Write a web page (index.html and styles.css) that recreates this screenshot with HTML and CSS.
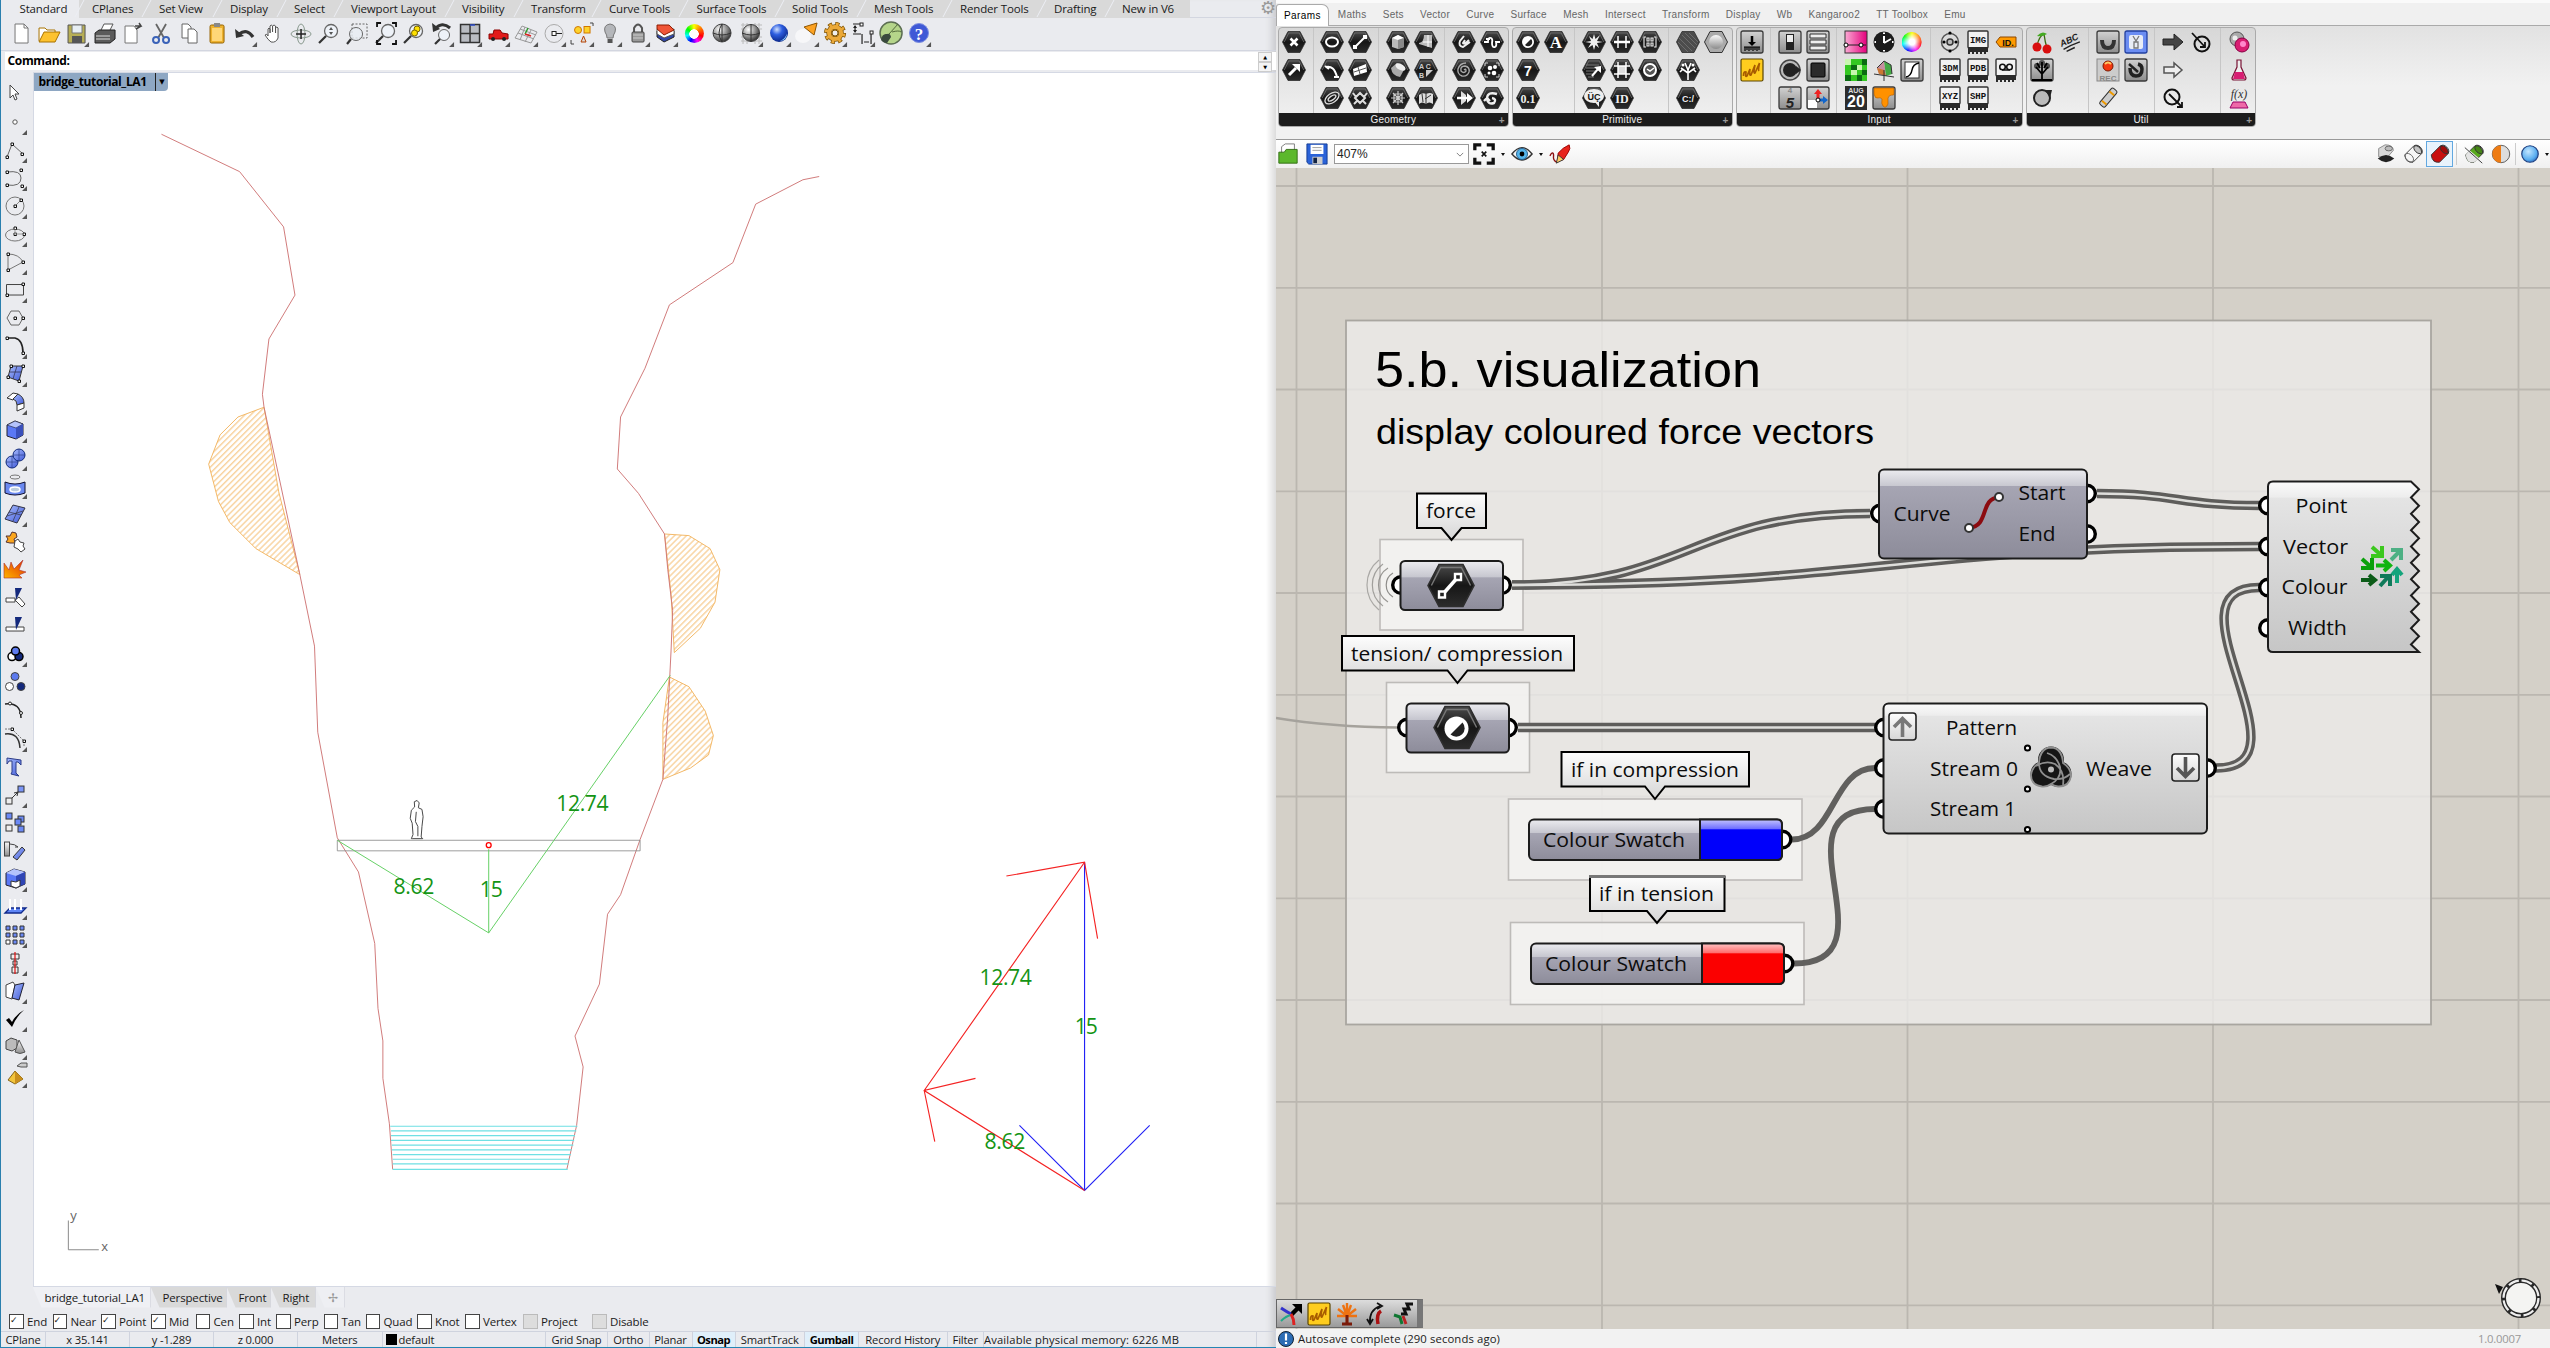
FILE: index.html
```html
<!DOCTYPE html>
<html lang="en">
<head>
<meta charset="utf-8">
<title>bridge_tutorial_LA1</title>
<link rel="stylesheet" href="styles.css">
</head>
<body>
<svg class="defs" aria-hidden="true">
  <defs>
    <linearGradient id="gHex" x1="0" y1="0" x2="0" y2="1"><stop offset="0" stop-color="#4a4a4a"/><stop offset=".5" stop-color="#161616"/><stop offset="1" stop-color="#2c2c2c"/></linearGradient>
    <linearGradient id="gBlue" x1="0" y1="0" x2="1" y2="1"><stop offset="0" stop-color="#a9bdfc"/><stop offset="1" stop-color="#4059d8"/></linearGradient>
    <linearGradient id="gGrey" x1="0" y1="0" x2="0" y2="1"><stop offset="0" stop-color="#fafafa"/><stop offset="1" stop-color="#8b8b8b"/></linearGradient>
    <linearGradient id="gFlat" x1="0" y1="0" x2="0" y2="1"><stop offset="0" stop-color="#d2d2d2"/><stop offset="1" stop-color="#8d8d8d"/></linearGradient>
    <linearGradient id="gParam" x1="0" y1="0" x2="0" y2="1"><stop offset="0" stop-color="#ececf0"/><stop offset=".33" stop-color="#c6c6cf"/><stop offset=".34" stop-color="#a6a5b3"/><stop offset="1" stop-color="#8d8c9a"/></linearGradient>
    <linearGradient id="gCurve" x1="0" y1="0" x2="0" y2="1"><stop offset="0" stop-color="#ececf0"/><stop offset=".18" stop-color="#c9c9d1"/><stop offset=".19" stop-color="#a6a5b3"/><stop offset="1" stop-color="#8d8c9a"/></linearGradient>
    <linearGradient id="gComp" x1="0" y1="0" x2="0" y2="1"><stop offset="0" stop-color="#fbfbfb"/><stop offset=".09" stop-color="#ededed"/><stop offset=".1" stop-color="#e4e4e4"/><stop offset="1" stop-color="#c6c6c6"/></linearGradient>
    <linearGradient id="gLabel" x1="0" y1="0" x2="0" y2="1"><stop offset="0" stop-color="#fdfdfd"/><stop offset="1" stop-color="#d6d6d6"/></linearGradient>
    <linearGradient id="gSwBlue" x1="0" y1="0" x2="0" y2="1"><stop offset="0" stop-color="#c4c4ff"/><stop offset=".24" stop-color="#6a6aff"/><stop offset=".25" stop-color="#0000fb"/></linearGradient>
    <linearGradient id="gSwRed" x1="0" y1="0" x2="0" y2="1"><stop offset="0" stop-color="#ffc4c4"/><stop offset=".24" stop-color="#ff6a6a"/><stop offset=".25" stop-color="#fb0000"/></linearGradient>
    <linearGradient id="gFire" x1="0" y1="1" x2="1" y2="0"><stop offset="0" stop-color="#ffb400"/><stop offset="1" stop-color="#e02c00"/></linearGradient>
    <linearGradient id="gPink" x1="0" y1="0" x2="1" y2="0"><stop offset="0" stop-color="#fbaad4"/><stop offset="1" stop-color="#e4007c"/></linearGradient>
    <radialGradient id="gBall" cx=".35" cy=".3" r=".75"><stop offset="0" stop-color="#fff"/><stop offset=".5" stop-color="#9a9a9a"/><stop offset="1" stop-color="#2c2c2c"/></radialGradient>
    <radialGradient id="gBlueBall" cx=".38" cy=".3" r=".75"><stop offset="0" stop-color="#cfe0ff"/><stop offset=".4" stop-color="#2e5ee0"/><stop offset="1" stop-color="#062080"/></radialGradient>
    <radialGradient id="gSky" cx=".4" cy=".35" r=".7"><stop offset="0" stop-color="#c3e6ff"/><stop offset=".7" stop-color="#5aaef0"/><stop offset="1" stop-color="#2c6cc0"/></radialGradient>
    <symbol id="hex" viewBox="-12 -12 24 24" overflow="visible"><path d="M-11.500 0L-6-10.500H6L11.500 0L6 10.500H-6Z" fill="url(#gHex)" stroke="#2e2e2e" stroke-width=".8"/><path d="M-9.800 0L-5.200-9H5.200L9.800 0" fill="none" stroke="#777" stroke-width=".7"/></symbol>
    <symbol id="btn" viewBox="-12 -12 24 24" overflow="visible"><rect x="-11" y="-11" width="22" height="22" rx="2" fill="url(#gFlat)" stroke="#3a3a3a" stroke-width="1.3"/></symbol>
    <symbol id="chip" viewBox="-12 -12 24 24" overflow="visible"><rect x="-10" y="-11" width="20" height="17" rx="1" fill="#f2f2f2" stroke="#333" stroke-width="1.4"/><path d="M-10 5H10V10H8V12H6V10H4V12H2V10H0V12H-2V10H-4V12H-6V10H-8V12H-10Z" fill="#2a2a2a"/></symbol>
    <symbol id="tri" viewBox="0 0 28 28"><path d="M26 22V27H21Z" fill="#555"/></symbol>
    <symbol id="lens" viewBox="0 0 28 28"><circle cx="16" cy="11" r="6.500" fill="#eef2f8" stroke="#666" stroke-width="1.300"/><path d="M11 16L4 23" stroke="#333" stroke-width="2.200"/></symbol>
    <symbol id="scrib" viewBox="-12 -12 24 24"><rect x="-11" y="-11" width="22" height="22" rx="1.500" fill="#ffcd1e" stroke="#5a4500" stroke-width="1.200"/><path d="M-8.500 6Q-8.500 1-6 2Q-7 8-5 6L-2-1Q-3 6-1 5L3-5Q1 4 3 3L7.500-7Q6 0 7 1" fill="none" stroke="#a85c00" stroke-width="1.700"/></symbol>
    <symbol id="tube" viewBox="-12 -12 24 24"><path d="M-9 1L1-9Q8-10 10-1L0 9Q-8 10-9 1Z" stroke="#333"/><ellipse cx="5.500" cy="-5" rx="3.500" ry="5.500" transform="rotate(-45 5.500 -5)" fill="#0003" stroke="#333"/></symbol>
    <pattern id="hatch" width="2.600" height="2.600" patternUnits="userSpaceOnUse" patternTransform="rotate(-45)"><path d="M0 1H2.600" stroke="#f3b765" stroke-width=".55"/></pattern>
  </defs>
</svg>

<main class="desktop">
<section class="rhino">
  <nav class="rtabs"><span class="on">Standard</span><span>CPlanes</span><span>Set View</span><span>Display</span><span>Select</span><span>Viewport Layout</span><span>Visibility</span><span>Transform</span><span>Curve Tools</span><span>Surface Tools</span><span>Solid Tools</span><span>Mesh Tools</span><span>Render Tools</span><span>Drafting</span><span>New in V6</span><b>⚙</b></nav>
  <div class="rtools">
    <svg viewBox="0 0 28 28"><path d="M8 4H17L21 8V23H8Z" fill="#fff" stroke="#777"/><path d="M17 4V8H21" fill="none" stroke="#777"/></svg>
    <svg viewBox="0 0 28 28"><path d="M4 21V8H10L12 10H20V13" fill="#fff" stroke="#a87300"/><path d="M4 22L9 12H25L20 22Z" fill="#fdc22e" stroke="#a87300"/></svg>
    <svg viewBox="0 0 28 28"><path d="M5 5H22V23H5Z" fill="#b7ae55" stroke="#555"/><path d="M9 5H19V13H9Z" fill="#e7eef3" stroke="#777"/><path d="M9 16H19V23H9Z" fill="#555"/><use href="#tri"/></svg>
    <svg viewBox="0 0 28 28"><path d="M9 12L13 4H22L18 12" fill="#fff" stroke="#555"/><path d="M4 13L8 10H24V19L19 23H4Z" fill="#5b5b5b" stroke="#222"/><path d="M5 16H19M5 19H19" stroke="#ddd"/></svg>
    <svg viewBox="0 0 28 28"><path d="M6 6H15L18 10V23H6Z" fill="#fff" stroke="#777"/><path d="M16 6H22L20 3M17 9L22 6" stroke="#444" fill="none" stroke-width="1.500"/></svg>
    <svg viewBox="0 0 28 28"><path d="M9 4L17 18M19 4L11 18" stroke="#666" stroke-width="1.800"/><g fill="none" stroke="#3a62b8" stroke-width="2"><circle cx="9" cy="20" r="3"/><circle cx="19" cy="20" r="3"/></g></svg>
    <svg viewBox="0 0 28 28"><path d="M7 4H13L16 7V18H7Z" fill="#fff" stroke="#666"/><path d="M13 9H19L22 12V23H13Z" fill="#fff" stroke="#666"/></svg>
    <svg viewBox="0 0 28 28"><rect x="7" y="5" width="14" height="18" rx="1.500" fill="#eeb22e" stroke="#946200"/><path d="M9 8H19V21H9Z" fill="#ffd778"/><rect x="11" y="3" width="6" height="4" fill="#888"/></svg>
    <svg viewBox="0 0 28 28"><path d="M8 14Q16 8 22 17" fill="none" stroke="#333" stroke-width="3.200"/><path d="M4 9L5 18L13 16Z" fill="#333"/><use href="#tri"/></svg>
    <svg viewBox="0 0 28 28"><path d="M9 16V9Q10 7 11 9V13V6Q12 4 13.500 6V12V6Q15 4 16.500 6V13V8Q18 6 19 8V18Q17 23 12 22Q9 20 6 15Q8 13 9 16Z" fill="#fff" stroke="#555"/></svg>
    <svg viewBox="0 0 28 28"><g fill="none" stroke="#8a9a8f"><ellipse cx="14" cy="14" rx="10" ry="4"/><ellipse cx="14" cy="14" rx="4" ry="10"/></g><path d="M14 9V19M9 14H19" stroke="#222" stroke-width="1.500"/></svg>
    <svg viewBox="0 0 28 28"><use href="#lens"/><path d="M16 7L14 10H18ZM16 15L14 12H18Z" fill="#555"/></svg>
    <svg viewBox="0 0 28 28"><path d="M9 4H24V18H9Z" fill="none" stroke="#666" stroke-dasharray="2 1.500"/><circle cx="13" cy="14" r="6.500" fill="#e9eef4cc" stroke="#666"/><path d="M8 19L4 24" stroke="#333" stroke-width="2.200"/></svg>
    <svg viewBox="0 0 28 28"><use href="#lens"/><path d="M5 7V3H9M20 3H24V7M5 20V24H9M20 24H24V20" stroke="#111" stroke-width="1.800" fill="none"/></svg>
    <svg viewBox="0 0 28 28"><use href="#lens"/><circle cx="17" cy="9" r="3" fill="#ffe100" stroke="#776200"/><circle cx="14.500" cy="13" r="3" fill="#ffe100" stroke="#776200"/></svg>
    <svg viewBox="0 0 28 28"><circle cx="16" cy="15" r="5.500" fill="#eef2f8" stroke="#666"/><path d="M12 19L7 24" stroke="#333" stroke-width="2.200"/><path d="M7 9Q14 1 22 8" fill="none" stroke="#333" stroke-width="3"/><path d="M4 3L5 12L12 9Z" fill="#333"/><use href="#tri"/></svg>
    <svg viewBox="0 0 28 28"><rect x="4.500" y="4.500" width="19" height="18" fill="#b9bcc2" stroke="#333" stroke-width="1.500"/><path d="M14 4V23M4 13.500H24" stroke="#333" stroke-width="1.500"/><path d="M14 5H19" stroke="#2c4ccc" stroke-width="1.500"/><use href="#tri"/></svg>
    <svg viewBox="0 0 28 28"><path d="M5 14H9L10 10H16L18 13L24 14V19H5Z" fill="#e21a1a" stroke="#8c0000"/><circle cx="9" cy="19" r="2" fill="#222"/><circle cx="20" cy="19" r="2" fill="#222"/><use href="#tri"/></svg>
    <svg viewBox="0 0 28 28"><path d="M3 18L10 6L25 12L19 23ZM6 13L22 19M13 7L8 20M19 10L13 22M8 9L24 15" fill="none" stroke="#999"/><path d="M13 14L16 8" stroke="#2a9a2a" stroke-width="1.500"/><path d="M13 14L19 16" stroke="#d22" stroke-width="1.500"/><use href="#tri"/></svg>
    <svg viewBox="0 0 28 28"><circle cx="14" cy="13.500" r="9" fill="none" stroke="#aaa"/><path d="M14 13.500H22" stroke="#222"/><rect x="12" y="11.500" width="4" height="4" fill="#fff" stroke="#222"/><use href="#tri"/></svg>
    <svg viewBox="0 0 28 28"><circle cx="10" cy="10" r="3.500" fill="#fdd32c" stroke="#d17800"/><rect x="16" y="6.500" width="6" height="6.500" fill="#fdd32c" stroke="#d17800"/><path d="M13 22L15.500 16L18 22Z" fill="#ddd" stroke="#b54100"/><path d="M22 3H25V6M3 20V24H6" fill="none" stroke="#444"/><use href="#tri"/></svg>
    <svg viewBox="0 0 28 28"><path d="M11 18Q11 15 9 12Q7 5 14 4Q21 5 19 12Q17 15 17 18Z" fill="#b4b6ba" stroke="#777"/><path d="M11.500 19H16.500V23H11.500Z" fill="#555"/><use href="#tri"/></svg>
    <svg viewBox="0 0 28 28"><path d="M10 13V8Q14 1 18 8V13" fill="none" stroke="#555" stroke-width="2"/><rect x="8" y="12" width="12" height="10" rx="1" fill="#999" stroke="#444"/><path d="M9 15H19M9 18H19" stroke="#ccc"/><use href="#tri"/></svg>
    <svg viewBox="0 0 28 28"><path d="M5 11L12 14L22 11V17L12 22L5 17Z" fill="#3146a8" stroke="#222"/><path d="M5 9L12 12L22 9V14L12 18L5 14Z" fill="#fff" stroke="#555"/><path d="M5 5L17 5L22 10L12 15L5 9Z" fill="#f05537" stroke="#8c1b00"/><use href="#tri"/></svg>
    <span class="wheel"></span>
    <svg viewBox="0 0 28 28"><circle cx="14" cy="13" r="9" fill="url(#gBall)" stroke="#444"/><path d="M14 4Q8 13 14 22M14 4V22M5 13Q14 17 23 13" fill="none" stroke="#333"/></svg>
    <svg viewBox="0 0 28 28"><path d="M4 5H25M4 9H25M4 17H25M4 21H25M6 3V24M10 3V24M18 3V24M22 3V24" stroke="#bbb"/><circle cx="14" cy="13" r="8.500" fill="url(#gBall)" stroke="#444"/><path d="M14 4V22M5 13Q14 17 23 13" fill="none" stroke="#333"/><use href="#tri"/></svg>
    <svg viewBox="0 0 28 28"><circle cx="14" cy="13" r="9" fill="url(#gBlueBall)"/><path d="M15 21Q22 20 22 13Q21 18 15 21Z" fill="#8cf"/><use href="#tri"/></svg>
    <svg viewBox="0 0 28 28"><ellipse cx="10" cy="16" rx="8" ry="7" fill="#fff9"/><path d="M11 7L24 3L21 15Z" fill="#fca222" stroke="#8e5400"/><use href="#tri"/></svg>
    <svg viewBox="0 0 28 28"><circle cx="14" cy="13" r="8.800" fill="none" stroke="#805300" stroke-width="4.500" stroke-dasharray="3.900 3.010"/><circle cx="14" cy="13" r="6" fill="none" stroke="#805300" stroke-width="5.500"/><circle cx="14" cy="13" r="6" fill="none" stroke="#eba939" stroke-width="4"/><circle cx="14" cy="13" r="8.600" fill="none" stroke="#eba939" stroke-width="3.400" stroke-dasharray="2.600 4.154" stroke-dashoffset="-.65"/><circle cx="14" cy="13" r="3" fill="#eee" stroke="#805300"/><use href="#tri"/></svg>
    <svg viewBox="0 0 28 28"><path d="M4 4H12M4 14H12M6 6V12M13 14V24M22 14V24M15 22H20" fill="none" stroke="#222" stroke-width="1.200"/><path d="M6 5L4 8H8ZM6 13L4 10H8Z" fill="#222"/><rect x="11" y="3" width="3" height="3" fill="#fff" stroke="#222"/><rect x="21" y="11" width="3" height="3" fill="#fff" stroke="#222"/><use href="#tri"/></svg>
    <svg viewBox="0 0 28 28"><circle cx="14" cy="13" r="11" fill="#b5d58a" stroke="#5c6e52" stroke-width="1.500"/><path d="M4 20Q5 13 10 14Q13 13 14 17L10 23Q6 23 4 20Z" fill="#3a4a3e"/><path d="M12 14L21 4M15 12Q22 10 24 12" stroke="#536a3c" fill="none"/></svg>
    <svg viewBox="0 0 28 28"><circle cx="14" cy="13" r="9.500" fill="#3f59d6" stroke="#7e8fe0"/><text x="14" y="19.500" text-anchor="middle" class="q">?</text><use href="#tri"/></svg>
  </div>
  <div class="cmd"><span>Command:</span><i><b>▲</b><b>▼</b></i></div>
  <div class="work">
    <div class="side">
      <svg viewBox="0 0 28 28"><path d="M9 5V18L12 15L14 20L16 19L14 14H18Z" fill="#fff" stroke="#444"/></svg>
      <svg viewBox="0 0 28 28"><circle cx="14" cy="14" r="2.200" fill="#fff" stroke="#555"/><use href="#tri"/></svg>
      <svg viewBox="0 0 28 28"><path d="M6 21L11 8L22 18" fill="none" stroke="#666"/><path d="M5 20h2.500v2.500h-2.500zM10 7h2.500v2.500h-2.500zM20 17h2.500v2.500h-2.500z" fill="#fff" stroke="#111"/><use href="#tri"/></svg>
      <svg viewBox="0 0 28 28"><path d="M6 8Q20 6 20 14Q20 23 6 21" fill="none" stroke="#666"/><path d="M5 7h2.500v2.500h-2.500zM19 5h2.500v2.500h-2.500zM5 20h2.500v2.500h-2.500zM20 21h2.500v2.500h-2.500z" fill="#fff" stroke="#111"/><use href="#tri"/></svg>
      <svg viewBox="0 0 28 28"><circle cx="14" cy="14" r="9" fill="none" stroke="#777"/><path d="M14 14L20 8" stroke="#888"/><path d="M13 13h2.500v2.500h-2.500zM19 7h2.500v2.500h-2.500z" fill="#fff" stroke="#111"/><use href="#tri"/></svg>
      <svg viewBox="0 0 28 28"><ellipse cx="14" cy="15" rx="9.500" ry="6" fill="none" stroke="#777"/><path d="M13 7h2.500v2.500h-2.500zM13 13h2.500v2.500h-2.500zM22 13h2.500v2.500h-2.500z" fill="#fff" stroke="#111"/><path d="M14 9V14H22" stroke="#999" fill="none"/><use href="#tri"/></svg>
      <svg viewBox="0 0 28 28"><path d="M7 6Q18 6 22 14L7 22Z" fill="none" stroke="#777"/><path d="M6 5h2.500v2.500h-2.500zM21 13h2.500v2.500h-2.500zM6 21h2.500v2.500h-2.500z" fill="#fff" stroke="#111"/><use href="#tri"/></svg>
      <svg viewBox="0 0 28 28"><path d="M5.500 8.500H22.500V19H5.500Z" fill="none" stroke="#444"/><path d="M21 7h2.500v2.500h-2.500zM5 18h2.500v2.500h-2.500z" fill="#fff" stroke="#111"/><use href="#tri"/></svg>
      <svg viewBox="0 0 28 28"><path d="M6 14L10 7H18L22 14L18 21H10Z" fill="none" stroke="#666"/><path d="M13 13h2.500v2.500h-2.500zM21 13h2.500v2.500h-2.500z" fill="#fff" stroke="#111"/><use href="#tri"/></svg>
      <svg viewBox="0 0 28 28"><path d="M6 6H14Q22 8 22 21" fill="none" stroke="#222" stroke-width="1.600"/><path d="M5 5h2.500v2.500h-2.500zM21 20h2.500v2.500h-2.500z" fill="#fff" stroke="#111"/><use href="#tri"/></svg>
      <svg viewBox="0 0 28 28"><path d="M10 6H22L18 21L7 17Z" fill="url(#gBlue)" stroke="#333"/><path d="M16 6L12 19M9 12H20" stroke="#335" stroke-width=".8"/><path d="M9 5h2.500v2.500h-2.500zM21 5h2.500v2.500h-2.500zM17 20h2.500v2.500h-2.500zM6 16h2.500v2.500h-2.500z" fill="#fff" stroke="#111"/><use href="#tri"/></svg>
      <svg viewBox="0 0 28 28"><path d="M6 10L12 5L17 6L12 12Z" fill="#fff" stroke="#333"/><path d="M17 6Q23 9 23 15L16 17Q16 12 12 11Z" fill="url(#gBlue)" stroke="#333"/><path d="M16 17L23 15V20L16 23Z" fill="#fff" stroke="#333"/><use href="#tri"/></svg>
      <svg viewBox="0 0 28 28"><path d="M6 9L14 5L22 8V19L15 23L6 20Z" fill="#5a78f5" stroke="#223"/><path d="M6 9L14 5L22 8L15 12Z" fill="#b4c3fc" stroke="#223" stroke-width=".6"/><path d="M15 12V23L22 19V8Z" fill="#3a50bc"/><use href="#tri"/></svg>
      <svg viewBox="0 0 28 28"><circle cx="11" cy="18" r="6" fill="url(#gBlue)" stroke="#112a7a"/><circle cx="18" cy="11" r="6" fill="url(#gBlue)" stroke="#112a7a"/><path d="M18 5V17M12 11H24M5 18H17M11 12V24" stroke="#23357c" stroke-width=".6"/><use href="#tri"/></svg>
      <svg viewBox="0 0 28 28"><ellipse cx="14" cy="5" rx="5" ry="2" fill="none" stroke="#777"/><path d="M4 10Q14 14 24 10V21Q14 25 4 21Z" fill="#6b89f0" stroke="#113"/><ellipse cx="14" cy="17.500" rx="5" ry="2.500" fill="#bcd" stroke="#fff" stroke-width="1.500"/><use href="#tri"/></svg>
      <svg viewBox="0 0 28 28"><path d="M4 19L12 5L24 8L16 23Z" fill="url(#gBlue)" stroke="#334"/><path d="M8 12L20 15M12 21L18 7M6 16L22 11" stroke="#334" stroke-width=".7"/><use href="#tri"/></svg>
      <svg viewBox="0 0 28 28"><path d="M5 8L9 8L11 4L15 5L16 9L13 11L14 15L9 15L5 14L7 11Z" fill="#fba61e" stroke="#533"/><path d="M14 13L17 11L19 14L23 15L22 18L24 21L20 24L17 21L13 19Z" fill="#fff" stroke="#444"/></svg>
      <svg viewBox="0 0 28 28"><path d="M3 22V7L8 14L10 6L13 13L22 4L18 14L25 16L18 19L21 22Z" fill="url(#gFire)" stroke="#a33" stroke-width=".6"/></svg>
      <svg viewBox="0 0 28 28"><path d="M5 14H14V18H5ZM14 16L18 13L24 20L21 23Z" fill="#fff" stroke="#444"/><path d="M14 4H21L15 16Z" fill="#14297c"/></svg>
      <svg viewBox="0 0 28 28"><path d="M5 15H23V19H5Z" fill="#fff" stroke="#444"/><path d="M14 5H21L15 18Z" fill="#14297c"/></svg>
      <svg viewBox="0 0 28 28"><circle cx="11" cy="16.500" r="4" fill="#fff" stroke="#000" stroke-width="1.500"/><circle cx="18" cy="16.500" r="4" fill="#14297c" stroke="#000" stroke-width="1.500"/><circle cx="14.500" cy="11" r="4" fill="#5d7bef" stroke="#000" stroke-width="1.500"/><use href="#tri"/></svg>
      <svg viewBox="0 0 28 28"><circle cx="8.500" cy="18.500" r="4" fill="#fff" stroke="#444"/><circle cx="20" cy="18.500" r="4" fill="#14297c" stroke="#444"/><circle cx="14" cy="8.500" r="4" fill="#5d7bef" stroke="#444"/></svg>
      <svg viewBox="0 0 28 28"><path d="M4 7Q20 5 20 21" fill="none" stroke="#222" stroke-width="1.500"/><circle cx="9" cy="6.500" r="1.500" fill="#fff" stroke="#222"/><circle cx="20" cy="16" r="1.500" fill="#fff" stroke="#222"/></svg>
      <svg viewBox="0 0 28 28"><path d="M4 9Q18 7 19 23" fill="none" stroke="#333" stroke-width="1.500"/><path d="M4 4H11L23 16V22" fill="none" stroke="#777" stroke-dasharray="2 1"/><path d="M10 3h2.500v2.500h-2.500zM22 15h2.500v2.500h-2.500z" fill="#fff" stroke="#111"/><use href="#tri"/></svg>
      <svg viewBox="0 0 28 28"><path d="M6 5L20 7V12L17 9L15 9V20L18 23L10 21L11 19V8L8 8L6 11Z" fill="url(#gBlue)" stroke="#2c3c88"/></svg>
      <svg viewBox="0 0 28 28"><rect x="5" y="17" width="6" height="6" fill="#eee" stroke="#333"/><rect x="17" y="5" width="6" height="6" fill="#7b95f7" stroke="#333"/><path d="M11 17L17 11M17 11L13 12M17 11L16 15" stroke="#333"/><use href="#tri"/></svg>
      <svg viewBox="0 0 28 28"><g fill="#6b89f5" stroke="#333"><rect x="5" y="4" width="6" height="6"/><rect x="17" y="7" width="6" height="6"/><rect x="14" y="10" width="6" height="6"/><rect x="17" y="17" width="6" height="6"/><rect x="5" y="16" width="6" height="6" fill="#eee"/></g></svg>
      <svg viewBox="0 0 28 28"><rect x="3.500" y="5" width="5" height="14" fill="url(#gGrey)" stroke="#444"/><path d="M9 7Q14 7 17 10M17 10L14 10" stroke="#444" fill="none"/><path d="M12 20L21 10L24 13L16 23Z" fill="url(#gBlue)" stroke="#333"/></svg>
      <svg viewBox="0 0 28 28"><path d="M5 8L13 4L24 7V19L15 23L5 20Z" fill="#5a78f5" stroke="#223"/><path d="M5 8L13 4L24 7L15 11Z" fill="#b4c3fc"/><path d="M15 11V23L24 19V7Z" fill="#3046b5"/><path d="M10 16L15 17L19 15V21L15 23L10 21Z" fill="#fff" stroke="#333"/><use href="#tri"/></svg>
      <svg viewBox="0 0 28 28"><path d="M4 20L9 15H25L20 20Z" fill="#5f86f6" stroke="#102a8c" stroke-width="1.300"/><path d="M9 17V6M14 17V6M20 17V6" stroke="#fff" stroke-width="2"/><use href="#tri"/></svg>
      <svg viewBox="0 0 28 28"><g fill="#6b89f5" stroke="#333"><path d="M5 5h4v4h-4zM12 5h4v4h-4zM19 5h4v4h-4zM5 12h4v4h-4zM12 12h4v4h-4zM19 12h4v4h-4zM12 19h4v4h-4zM19 19h4v4h-4z"/><path d="M5 19h4v4h-4z" fill="#fff"/></g><use href="#tri"/></svg>
      <svg viewBox="0 0 28 28"><path d="M10 5h8v5h-8zM12 12h4v4h-4zM11 18h6v6h-6z" fill="#eee" stroke="#333"/><path d="M14 3V25" stroke="#e01010" stroke-width="1.200"/><use href="#tri"/></svg>
      <svg viewBox="0 0 28 28"><path d="M5 8L12 5L14 8L11 22L5 20Z" fill="#fff" stroke="#444"/><path d="M14 8L23 6L18 23L11 21Z" fill="url(#gBlue)" stroke="#223"/><use href="#tri"/></svg>
      <svg viewBox="0 0 28 28"><path d="M5 15L8 13L11 17Q15 9 23 5Q15 12 11 22Z" fill="#000"/><use href="#tri"/></svg>
      <svg viewBox="0 0 28 28"><path d="M5 8L10 5L16 7V15L11 18L5 16Z" fill="#bbb" stroke="#444"/><path d="M18 7L24 19Q19 22 14 19Z" fill="url(#gGrey)" stroke="#555"/><use href="#tri"/></svg>
      <svg viewBox="0 0 28 28"><path d="M7 19L14 10L22 18L14 23Z" fill="#f2c43c" stroke="#84651a"/><path d="M14 10L14 23L22 18Z" fill="#c98f1d"/><path d="M16 5L20 2H26V6H20Z" fill="#ccc" stroke="#555"/><use href="#tri"/></svg>
    </div>
    <div class="view">
      <div class="vtitle"><span>bridge_tutorial_LA1</span><b>▼</b></div>
      <svg class="drawing" viewBox="21.700 44.300 763.200 746.200" preserveAspectRatio="none">
        <g fill="url(#hatch)" stroke="#f3b765" stroke-width=".6"><path d="M163 250L147 256L136 267L129 285L135 308L142 321L158 337L185 353L172 302Z"/><path d="M409 328L424 329L437 337L443 350L440 370L431 386L415 401L413 365Z"/><path d="M412 416L424 422L434 437L439 452L436 464L425 472L408 479V444Z"/></g>
        <g fill="none" stroke="#d07878" stroke-width=".6"><path d="M100 82L148 105L175 139L182 181L166 208L162 242L163 250L185 353L194 397L196 450L208 515L221 536L231 580L233 620L236 640V663L240 691L242 719"/><path d="M504 108L494 110L465 125L451 161L412 187L397 226L382 256L380 288L393 303L409 328L411 350L414 375L413 400L411 440L408 479L394 516L382 550L374 562L369 605L354 637L359 656L355 692L349 719"/></g>
        <path d="M240.500 692.500H355.500M241 695.400H354.800M241 698.300H354M241 701.200H353.500M241.500 704.100H353M241.500 707H352M242 709.900H351.500M242 712.800H350.500M242 715.700H350M242 719H349.500" stroke="#6fe0e4" stroke-width=".75"/>
        <path d="M208 516.500H394V523H208Z" fill="none" stroke="#888" stroke-width=".5"/>
        <path d="M254 515.500H260.500L259.500 514.500L260 508L260.700 502L260 497.500L257.800 496.500L258.300 493.500L257 492L255.300 492.800L255.500 496L253.500 498L252.800 503L254 506L254.500 513L253.500 515.500ZM256.500 499L256 505L257.500 508V514" fill="none" stroke="#444" stroke-width=".6"/>
        <path d="M208 516.500L301 573.500L412.500 415M301 573.500V522" fill="none" stroke="#62cf62" stroke-width=".6"/>
        <circle cx="301" cy="519.500" r="1.500" fill="#fff" stroke="#f00" stroke-width=".8"/>
        <path d="M667 530V732M627 692L667 732L707 692" fill="none" stroke="#2222f5" stroke-width=".7"/>
        <path d="M667 732L568.500 670.500L667 530M619 538.500L667 530L675 577M600 663L568.500 670.500L575 702" fill="none" stroke="#f42323" stroke-width=".7"/>
        <g class="dim"><text x="342.500" y="498.500" textLength="32">12.74</text><text x="242.500" y="549.500" textLength="25">8.62</text><text x="295.500" y="551.500" textLength="14">15</text><text x="602.500" y="605.500" textLength="32">12.74</text><text x="605.500" y="706.500" textLength="25">8.62</text><text x="661" y="636" textLength="14">15</text></g>
        <path d="M42.800 750.500V768.500H61.500" fill="none" stroke="#888" stroke-width=".6"/>
        <g class="axis"><text x="44" y="750">y</text><text x="63" y="769.500">x</text></g>
      </svg>
    </div>
  </div>
  <nav class="vtabs"><span class="on">bridge_tutorial_LA1</span><span>Perspective</span><span>Front</span><span>Right</span><span class="add">✢</span></nav>
  <div class="osnap"><label class="c">End</label><label class="c">Near</label><label class="c">Point</label><label class="c">Mid</label><label>Cen</label><label>Int</label><label>Perp</label><label>Tan</label><label>Quad</label><label>Knot</label><label>Vertex</label><label class="d">Project</label><label class="d">Disable</label></div>
  <footer class="rstat"><span>CPlane</span><span>x 35.141</span><span>y -1.289</span><span>z 0.000</span><span>Meters</span><span class="lay"><i></i>default</span><span>Grid Snap</span><span>Ortho</span><span>Planar</span><span class="hot">Osnap</span><span>SmartTrack</span><span class="hot">Gumball</span><span>Record History</span><span>Filter</span><span class="mem">Available physical memory: 6226 MB</span><span></span></footer>
</section>

<section class="gh">
  <nav class="gtabs"><span class="on">Params</span><span>Maths</span><span>Sets</span><span>Vector</span><span>Curve</span><span>Surface</span><span>Mesh</span><span>Intersect</span><span>Transform</span><span>Display</span><span>Wb</span><span>Kangaroo2</span><span>TT Toolbox</span><span>Emu</span></nav>
  <div class="ribbon">
    <article class="panel"><div class="groups">
      <div class="grp">
        <svg viewBox="-12 -12 24 24"><use href="#hex" x="-12" y="-12" width="24" height="24"/><path d="M-3.500-3.500L3.500 3.500M3.500-3.500L-3.500 3.500" stroke="#fff" stroke-width="2.600"/></svg>
        <svg viewBox="-12 -12 24 24"><use href="#hex" x="-12" y="-12" width="24" height="24"/><path d="M-5 5L2-2" stroke="#fff" stroke-width="3"/><path d="M6-6V2L-2-6Z" fill="#fff"/></svg><i></i>
      </div>
      <div class="grp">
        <svg viewBox="-12 -12 24 24"><use href="#hex" x="-12" y="-12" width="24" height="24"/><ellipse rx="6" ry="4.500" fill="none" stroke="#fff" stroke-width="2"/></svg>
        <svg viewBox="-12 -12 24 24"><use href="#hex" x="-12" y="-12" width="24" height="24"/><path d="M-6-3Q2-5 5 7M-7-4L-3-1M2 7H7" fill="none" stroke="#fff" stroke-width="2"/></svg>
        <svg viewBox="-12 -12 24 24"><use href="#hex" x="-12" y="-12" width="24" height="24"/><g fill="none" stroke="#ddd" stroke-width="1.300" transform="rotate(-35)"><ellipse rx="8" ry="4.500"/><ellipse rx="4.500" ry="2"/></g></svg>
        <svg viewBox="-12 -12 24 24"><use href="#hex" x="-12" y="-12" width="24" height="24"/><path d="M-5 5L5-5" stroke="#fff" stroke-width="2"/><rect x="-7" y="3" width="4" height="4" fill="#fff"/><rect x="3" y="-7" width="4" height="4" fill="#fff"/></svg>
        <svg viewBox="-12 -12 24 24"><use href="#hex" x="-12" y="-12" width="24" height="24"/><path d="M-7-1L6-6L7 2L-6 6Z" fill="#fff"/><path d="M-6 2L6-2M-2-3L0 4" stroke="#555"/></svg>
        <svg viewBox="-12 -12 24 24"><use href="#hex" x="-12" y="-12" width="24" height="24"/><path d="M-5 0L0-5L5 0L0 5ZM-4-1L-7-5M4-1L7-5M-6 6L-2 2M6 6L2 2" fill="none" stroke="#ddd" stroke-width="2"/></svg>
      </div>
      <div class="grp">
        <svg viewBox="-12 -12 24 24"><use href="#hex" x="-12" y="-12" width="24" height="24"/><path d="M-6-4L0-7L6-4V5L0 7L-6 5Z" fill="#bbb"/><path d="M-6-4L0-2L6-4L0-7Z" fill="#fff"/><path d="M0-2V7L6 5V-4Z" fill="#888"/></svg>
        <svg viewBox="-12 -12 24 24"><use href="#hex" x="-12" y="-12" width="24" height="24"/><path d="M-7-2L-1-7L7-2L2 7Q-6 6-7-2Z" fill="#aaa"/><ellipse cx="2.500" cy="-3" rx="5.500" ry="3" transform="rotate(30 2.500 -3)" fill="#eee"/></svg>
        <svg viewBox="-12 -12 24 24"><use href="#hex" x="-12" y="-12" width="24" height="24"/><path d="M0-7V7M-7 0H7M-5-5L5 5M5-5L-5 5M-4-4H4V4H-4Z" fill="none" stroke="#ccc" stroke-width="1.200"/></svg>
        <svg viewBox="-12 -12 24 24"><use href="#hex" x="-12" y="-12" width="24" height="24"/><path d="M-2-7H6V6L-7 2V1Q-2 0-2-7Z" fill="#bbb"/><path d="M2-7V5M-3 0H6" stroke="#fff"/></svg>
        <svg viewBox="-12 -12 24 24"><use href="#hex" x="-12" y="-12" width="24" height="24"/><text x="-7" y="-1" class="t7">A C</text><text x="-7" y="8" class="t7">B</text><path d="M0 0H7L0 7Z" fill="#ccc"/></svg>
        <svg viewBox="-12 -12 24 24"><use href="#hex" x="-12" y="-12" width="24" height="24"/><path d="M-7-3Q-3-6 0-4Q4-6 7-4V6Q3 3 0 6Q-4 3-7 6Z" fill="#ddd"/><path d="M0-4V6M-4-4L-3 4M-1 1L5-3" stroke="#333"/></svg>
      </div>
      <div class="grp">
        <svg viewBox="-12 -12 24 24"><use href="#hex" x="-12" y="-12" width="24" height="24"/><path d="M0-6L-4-1Q-6 4-1 5L6 0M1-2L-1 1Q0 3 5-2" fill="none" stroke="#eee" stroke-width="2"/></svg>
        <svg viewBox="-12 -12 24 24"><use href="#hex" x="-12" y="-12" width="24" height="24"/><path d="M0 0Q2-2 2 1Q0 4-3 1Q-4-4 1-4Q6-3 5 2Q3 7-2 6Q-7 4-6-1Q-4-7 2-7" fill="none" stroke="#aaa" stroke-width="1.400"/></svg>
        <svg viewBox="-12 -12 24 24"><use href="#hex" x="-12" y="-12" width="24" height="24"/><path d="M-3-7L2-3V3L-3 7Z" fill="#ddd"/><path d="M-7 0H5" stroke="#fff" stroke-width="2.500"/><path d="M3-5L9 0L3 5Z" fill="#fff"/></svg>
        <svg viewBox="-12 -12 24 24"><use href="#hex" x="-12" y="-12" width="24" height="24"/><path d="M-8 0H-4Q-4-5-1-4Q1-3 0 1Q0 6 3 5Q5 4 4 0H8M-6-3H-2" fill="none" stroke="#fff" stroke-width="1.800"/></svg>
        <svg viewBox="-12 -12 24 24"><use href="#hex" x="-12" y="-12" width="24" height="24"/><g fill="#fff"><circle cx="-2" cy="-2" r="2.300"/><circle cx="3" cy="-3" r="2"/><circle cx="2" cy="3" r="2.300"/><circle cx="-3" cy="3" r="1.500"/></g><path d="M-7-4V-7H-4M4-7H7V-4M-7 4V7H-4M4 7H7V4" fill="none" stroke="#ccc"/></svg>
        <svg viewBox="-12 -12 24 24"><use href="#hex" x="-12" y="-12" width="24" height="24"/><path d="M5-4Q-5-7-5 1Q-4 7 2 5Q5 1 0 0M-8 3L-5 0L-2 3" fill="none" stroke="#eee" stroke-width="2.400"/></svg>
      </div>
    </div><h6>Geometry<b>+</b></h6></article>
    <article class="panel"><div class="groups">
      <div class="grp">
        <svg viewBox="-12 -12 24 24"><use href="#hex" x="-12" y="-12" width="24" height="24"/><circle r="6" fill="#fff"/><path d="M3-3A4.200 4.200 0 0 1-3 3Z" fill="#222"/></svg>
        <svg viewBox="-12 -12 24 24"><use href="#hex" x="-12" y="-12" width="24" height="24"/><text x="0" y="5.500" class="t14">7</text></svg>
        <svg viewBox="-12 -12 24 24"><use href="#hex" x="-12" y="-12" width="24" height="24"/><text x="0" y="5" class="t12s">0.1</text></svg>
        <svg viewBox="-12 -12 24 24"><use href="#hex" x="-12" y="-12" width="24" height="24"/><text x="0" y="6" class="t16s">A</text></svg><i></i><i></i>
      </div>
      <div class="grp">
        <svg viewBox="-12 -12 24 24"><use href="#hex" x="-12" y="-12" width="24" height="24"/><path d="M0-8L1.500-3L6-7L3-1L9 0L3 1L5 6L1.500 3L0 8L-1.500 3L-6 6L-3 1L-9 0L-3-1L-5-6L-1.500-3Z" fill="#eee"/></svg>
        <svg viewBox="-12 -12 24 24"><use href="#hex" x="-12" y="-12" width="24" height="24"/><path d="M-8-5H5M-8-2H5M-8 1H3M-8 4H0M-6 7H0" stroke="#777"/><path d="M-2 6L4-1" stroke="#fff" stroke-width="2"/><path d="M7-4V3L0-3Z" fill="#fff"/></svg>
        <svg viewBox="-12 -12 24 24"><use href="#hex" x="-12" y="-12" width="24" height="24"/><ellipse cx="0" cy="-2" rx="10" ry="7" fill="#eee"/><path d="M0 3L5 9L5 3Z" fill="#eee"/><text x="0" y="1.500" class="t9k">ÜÇ</text></svg>
        <svg viewBox="-12 -12 24 24"><use href="#hex" x="-12" y="-12" width="24" height="24"/><path d="M-8 0H8" stroke="#fff" stroke-width="2.600"/><path d="M-4-6V6M4-6V6" stroke="#fff" stroke-width="1.500"/></svg>
        <svg viewBox="-12 -12 24 24"><use href="#hex" x="-12" y="-12" width="24" height="24"/><path d="M-4-4H4V4H-4Z" fill="#ddd"/><path d="M-8-4H8M-8 4H8M-4-8V8M4-8V8" stroke="#fff" stroke-width="1.500"/></svg>
        <svg viewBox="-12 -12 24 24"><use href="#hex" x="-12" y="-12" width="24" height="24"/><text x="0" y="5" class="t12s">ID</text></svg>
        <svg viewBox="-12 -12 24 24"><use href="#hex" x="-12" y="-12" width="24" height="24"/><path d="M-4-5H-6V5H-4M4-5H6V5H4M-3-4h2v3h-2zM1-4h2v3h-2zM-3 1h2v3h-2zM1 1h2v3h-2z" fill="none" stroke="#eee" stroke-width="1.100"/></svg>
        <svg viewBox="-12 -12 24 24"><use href="#hex" x="-12" y="-12" width="24" height="24"/><circle r="6" fill="#555" stroke="#fff" stroke-width="2"/><path d="M-3-1L0 1L4-2" fill="none" stroke="#fff" stroke-width="1.500"/></svg><i></i>
      </div>
      <div class="grp">
        <svg viewBox="-12 -12 24 24"><use href="#hex" x="-12" y="-12" width="24" height="24"/><path d="M-11 0L-6-10H6L11 0L6 10H-6Z" fill="#4c4c4c"/><path d="M-9-4L4 9M-6-7L7 6M-3-9L9 3M1-9L10 0M-10 0L0 10" stroke="#6c6c6c"/></svg>
        <svg viewBox="-12 -12 24 24"><use href="#hex" x="-12" y="-12" width="24" height="24"/><path d="M0 10V0M0 3L-7-2M0 3L7-2M0 0L-3-7M0 0L3-7M-5-1L-8 2M5-1L8 2" stroke="#fff" stroke-width="1.600"/><circle cx="-5" cy="-5" r="1.500" fill="#fff"/><circle cx="5" cy="-5" r="1.500" fill="#fff"/></svg>
        <svg viewBox="-12 -12 24 24"><use href="#hex" x="-12" y="-12" width="24" height="24"/><text x="0" y="3.500" class="t9w">C:/</text></svg>
        <svg viewBox="-12 -12 24 24"><path d="M-11.500 0L-6-10.500H6L11.500 0L6 10.500H-6Z" fill="#aaa" stroke="#333"/><circle r="7" fill="url(#gGrey)"/></svg><i></i><i></i>
      </div>
    </div><h6>Primitive<b>+</b></h6></article>
    <article class="panel"><div class="groups">
      <div class="grp">
        <svg viewBox="-12 -12 24 24"><use href="#btn" x="-12" y="-12" width="24" height="24"/><path d="M0-6V1" stroke="#000" stroke-width="2.500"/><path d="M-4 0H4L0 4Z"/><path d="M-8 5H8M-7 5V9M-5 5V8M-3 5V9M-1 5V8M1 5V9M3 5V8M5 5V9M7 5V8" stroke="#000" stroke-width="1.200"/></svg>
        <svg viewBox="-12 -12 24 24"><use href="#scrib" x="-12" y="-12" width="24" height="24"/></svg><i></i>
      </div>
      <div class="grp">
        <svg viewBox="-12 -12 24 24"><use href="#btn" x="-12" y="-12" width="24" height="24"/><rect x="-4" y="-8" width="8" height="16" fill="#222"/><rect x="-3" y="-7" width="6" height="7" fill="#eee"/></svg>
        <svg viewBox="-12 -12 24 24"><circle r="10" fill="#bbb" stroke="#444" stroke-width="1.500"/><circle r="7" fill="#222"/><path d="M6-4L11 0L6 4Z" fill="#222"/></svg>
        <svg viewBox="-12 -12 24 24"><use href="#btn" x="-12" y="-12" width="24" height="24"/><text x="0" y="10" class="t14i">5</text><text x="0" y="-5" class="t8g">4</text></svg>
        <svg viewBox="-12 -12 24 24"><use href="#btn" x="-12" y="-12" width="24" height="24"/><path d="M-8-8H8V-4H-8ZM-8-2H8V2H-8ZM-8 4H8V8H-8Z" fill="#eee" stroke="#333"/></svg>
        <svg viewBox="-12 -12 24 24"><use href="#btn" x="-12" y="-12" width="24" height="24"/><rect x="-7" y="-7" width="14" height="14" rx="1" fill="#2b2b2b" stroke="#000"/></svg>
        <svg viewBox="-12 -12 24 24"><use href="#btn" x="-12" y="-12" width="24" height="24"/><path d="M-10 2H-1V10H-10Z" fill="#fff"/><path d="M0 2V-4" stroke="#e22" stroke-width="3"/><path d="M-4-4H4L0-9Z" fill="#e22"/><path d="M0 2H5" stroke="#16c" stroke-width="3"/><path d="M5-2V6L10 2Z" fill="#16c"/><circle cy="2" r="2" fill="#fff" stroke="#000"/></svg>
      </div>
      <div class="grp">
        <svg viewBox="-12 -12 24 24"><rect x="-11" y="-11" width="22" height="22" fill="url(#gPink)" stroke="#333"/><path d="M-10 3H10" stroke="#222"/><circle cx="-10" cy="3" r="2" fill="#fff" stroke="#000"/><circle cx="5" cy="3" r="2" fill="#fff" stroke="#000"/></svg>
        <svg viewBox="-12 -12 24 24"><rect x="-11" y="-11" width="22" height="22" fill="#34c822"/><path d="M-11-11h6v6h-6zM1-5h5v5h-5zM-5 0h6v5h-6z" fill="#c8f7b0"/><path d="M-5-5h6v5h-6zM6-11h5v6h-5zM1 5h5v6h-5zM-11 5h6v6h-6zM6 0h5v5h-5z" fill="#0a6b12"/></svg>
        <svg viewBox="-12 -12 24 24"><rect x="-11" y="-12" width="22" height="24" fill="#2c2c2c"/><text x="0" y="-5" class="t7w">AUG</text><text x="0" y="9" class="t16w">20</text></svg>
        <svg viewBox="-12 -12 24 24"><circle r="10.500" fill="#1c1c1c"/><path d="M0 1V-6M0 1L7-3M0-9.500V-8M9.500 0H8M-9.500 0H-8M0 9.500V8" stroke="#fff" stroke-width="2"/></svg>
        <svg viewBox="-12 -12 24 24"><path d="M-7-2L0-9L2 5L-5 4Z" fill="#c88fa0"/><path d="M0-9L7-5L8 4L2 6Z" fill="#4a4"/><path d="M-5 4L-7-2L0 0L2 6Z" fill="#c73"/><path d="M-10 4L10 7M0 0V11M-7-2L0-9L7-5L8 4" stroke="#333" fill="none"/></svg>
        <svg viewBox="-12 -12 24 24"><use href="#btn" x="-12" y="-12" width="24" height="24"/><path d="M-10-10H10V-5Q10-2 8-3Q5-3 4 0V6Q2 11-1 8Q-3 6-2 1Q-4-1-6 0Q-9 1-10-4Z" fill="#ff9100" stroke="#b05d00" stroke-width=".6"/></svg>
        <span class="wheel pale"></span>
        <svg viewBox="-12 -12 24 24"><use href="#btn" x="-12" y="-12" width="24" height="24"/><rect x="-7" y="-8" width="14" height="16" fill="#fff" stroke="#333"/><path d="M-6 7Q-1 6 0 0Q1-6 7-7" fill="none" stroke="#000" stroke-width="1.500"/></svg><i></i>
      </div>
      <div class="grp">
        <svg viewBox="-12 -12 24 24"><circle r="8.500" fill="none" stroke="#555" stroke-width="1.500"/><circle r="3" fill="#bbb" stroke="#333" stroke-width="1.500"/><circle cy="-9" r="1.600"/><circle cx="-6" r="1.600"/><circle cx="6" r="1.600"/><circle cy="9" r="1.600"/></svg>
        <svg viewBox="-12 -12 24 24"><use href="#chip" x="-12" y="-12" width="24" height="24"/><text x="0" y="1" class="chip">3DM</text></svg>
        <svg viewBox="-12 -12 24 24"><use href="#chip" x="-12" y="-12" width="24" height="24"/><text x="0" y="1" class="chip">XYZ</text></svg>
        <svg viewBox="-12 -12 24 24"><use href="#chip" x="-12" y="-12" width="24" height="24"/><text x="0" y="1" class="chip">IMG</text></svg>
        <svg viewBox="-12 -12 24 24"><use href="#chip" x="-12" y="-12" width="24" height="24"/><text x="0" y="1" class="chip">PDB</text></svg>
        <svg viewBox="-12 -12 24 24"><use href="#chip" x="-12" y="-12" width="24" height="24"/><text x="0" y="1" class="chip">SHP</text></svg>
        <svg viewBox="-12 -12 24 24"><path d="M-10 0L-6-5H10V5H-6Z" fill="#ff9a00" stroke="#8d4700"/><text x="2" y="3.500" class="t9k">ID.</text></svg>
        <svg viewBox="-12 -12 24 24"><use href="#chip" x="-12" y="-12" width="24" height="24"/><circle cx="-3.500" cy="-3" r="2.800" fill="none" stroke="#111" stroke-width="1.600"/><circle cx="3.500" cy="-3" r="2.800" fill="none" stroke="#111" stroke-width="1.600"/><path d="M-4 0H4" stroke="#111" stroke-width="1.500"/></svg><i></i>
      </div>
    </div><h6>Input<b>+</b></h6></article>
    <article class="panel"><div class="groups">
      <div class="grp">
        <svg viewBox="-12 -12 24 24"><path d="M-5 4Q-3-6 2-8Q3 0 5 6" fill="none" stroke="#3a6a10" stroke-width="1.300"/><path d="M-5-6Q0-12 5-8Q0-5-5-6Z" fill="#4a2"/><circle cx="-5" cy="5" r="4.500" fill="#d90f0f"/><circle cx="5" cy="7" r="4.500" fill="#d90f0f"/></svg>
        <svg viewBox="-12 -12 24 24"><use href="#btn" x="-12" y="-12" width="24" height="24"/><path d="M0 11V0M0 4L-6-3M0 4L6-3M0 0V-8M-2-2L-5-7M2-2L5-7" stroke="#000" stroke-width="1.800"/><circle cx="-5" cy="-4" r="3" opacity=".6"/><circle cx="5" cy="-4" r="3" opacity=".6"/><circle cy="-7" r="3" opacity=".6"/><path d="M-10 9H10V11H-10Z"/></svg>
        <svg viewBox="-12 -12 24 24"><circle r="8" fill="#bbb" stroke="#222" stroke-width="2"/><path d="M3-8H10L8 0Z" fill="#222"/></svg>
        <svg viewBox="-12 -12 24 24"><g transform="rotate(-25)"><text x="0" y="1" class="abc">ABC</text><path d="M-9 4Q0 3 9 4M-7 7H2" stroke="#222" fill="none" stroke-width="1.400"/></g></svg><i></i><i></i>
      </div>
      <div class="grp">
        <svg viewBox="-12 -12 24 24"><use href="#btn" x="-12" y="-12" width="24" height="24"/><path d="M-6-2Q-6 6 0 6Q6 6 6-2" fill="none" stroke="#333" stroke-width="4"/></svg>
        <svg viewBox="-12 -12 24 24"><rect x="-11" y="-11" width="22" height="22" fill="#ccc" stroke="#888"/><circle cy="-4" r="5" fill="#f4380f" stroke="#7a1900"/><path d="M-3-6Q0-9 3-6" stroke="#fc6" stroke-width="2" fill="none"/><text x="0" y="10.500" class="t8g">REC</text></svg>
        <svg viewBox="-12 -12 24 24"><g transform="rotate(40)"><rect x="-3.500" y="-11" width="7" height="21" rx="2" fill="#ccc" stroke="#333"/><path d="M-3-6H3M-3 6H3" stroke="#e90" stroke-width="2"/></g></svg>
        <svg viewBox="-12 -12 24 24"><rect x="-11" y="-11" width="22" height="22" rx="2" fill="#6b8df2" stroke="#2240a0" stroke-width="1.300"/><rect x="-7" y="-7" width="14" height="14" rx="2" fill="#e8ecf5"/><path d="M-3-6L0-1L3-6M-2 0H2V6H-2Z" stroke="#777" stroke-width="1.300" fill="none"/></svg>
        <svg viewBox="-12 -12 24 24"><use href="#btn" x="-12" y="-12" width="24" height="24"/><path d="M-6-2Q-6 6 0 6Q6 6 6-1Q6-5 2-6" fill="none" stroke="#222" stroke-width="3.500"/><path d="M-7-6L2 2" stroke="#222" stroke-width="2.500"/></svg><i></i>
      </div>
      <div class="grp">
        <svg viewBox="-12 -12 24 24"><path d="M-10-3H1V-8L10 0L1 8V3H-10Z" fill="#444" stroke="#222"/></svg>
        <svg viewBox="-12 -12 24 24"><path d="M-9-3H1V-7L9 0L1 7V3H-9Z" fill="#eee" stroke="#555" stroke-width="1.500"/></svg>
        <svg viewBox="-12 -12 24 24"><circle cx="-1" cy="-1" r="7.500" fill="none" stroke="#111" stroke-width="2"/><path d="M-4-4L9 9M9 4V9H4" stroke="#111" stroke-width="1.800" fill="none"/></svg>
        <svg viewBox="-12 -12 24 24"><circle cx="1" cy="2" r="7.500" fill="none" stroke="#111" stroke-width="2"/><path d="M-9-9L4 5M4 0V5H-1" stroke="#111" stroke-width="1.800" fill="none"/></svg><i></i><i></i>
      </div>
      <div class="grp">
        <svg viewBox="-12 -12 24 24"><circle cx="-2" cy="-3" r="7" fill="#aaa" stroke="#555"/><circle cx="3" cy="3" r="7" fill="#d81d72" stroke="#804"/><circle cx="-4" cy="-4" r="2.500" fill="#eee"/><circle cx="4" cy="2" r="3" fill="#f8c"/></svg>
        <svg viewBox="-12 -12 24 24"><path d="M-2-10V-3L-7 8Q-7 10-5 10H5Q7 10 7 8L2-3V-10Z" fill="#eee" stroke="#713" stroke-width="1.200"/><path d="M-4 2L-6 9H6L4 2Z" fill="#d81d72"/></svg>
        <svg viewBox="-12 -12 24 24"><text x="0" y="0" class="fx">f(x)</text><path d="M-6 4H6L9 10H-9Z" fill="#ee6aa8" stroke="#906"/></svg>
      </div>
    </div><h6>Util<b>+</b></h6></article>
  </div>
  <div class="gbar">
    <svg viewBox="-12 -12 24 24"><path d="M-7 0V-8L-3-11H7V-2" fill="#fff" stroke="#777"/><path d="M-10-2H-4L-2-5H10V10H-10Z" fill="#5cb82c" stroke="#2f6a10"/></svg>
    <svg viewBox="-12 -12 24 24"><path d="M-11-11H11V11H-9L-11 9Z" fill="#2a62d8" stroke="#123a90"/><rect x="-7" y="-10" width="14" height="10" fill="#fff"/><path d="M-5-7H5M-5-4H5" stroke="#999"/><rect x="-5" y="3" width="11" height="8" fill="#ccc"/><rect x="-4" y="4" width="4" height="6" fill="#124"/></svg>
    <div class="zoombox">407%<svg viewBox="0 0 10 6"><path d="M1 1L5 5L9 1" fill="none" stroke="#666"/></svg></div>
    <svg viewBox="-12 -12 24 24"><path d="M-10-4V-10H-3M3-10H10V-4M-10 4V10H-3M3 10H10V4" fill="none" stroke="#111" stroke-width="3.600"/><path d="M-2.500-2.500L2.500 2.500M2.500-2.500L-2.500 2.500" stroke="#111" stroke-width="1.800"/></svg><b class="dd"></b>
    <svg viewBox="-12 -12 24 24"><path d="M-11 0Q0-14 11 0Q0 13-11 0Z" fill="#f4f4f4" stroke="#333" stroke-width="1.500"/><circle r="6" fill="#55b6ec" stroke="#1a5a8c"/><circle r="2.600" fill="#000"/></svg><b class="dd"></b>
    <svg viewBox="-12 -12 24 24"><path d="M-11 2Q-8-4-7 1Q-8 8-3 9" fill="none" stroke="#8a1010" stroke-width="1.500"/><path d="M-3 8L-2-1Q3-7 10-10Q12-6 9-2L4 6Z" fill="#e8241c" stroke="#900"/><path d="M-4 10L-2 1L4 6Z" fill="#fc6" stroke="#333"/></svg>
    <div class="right">
      <svg viewBox="-12 -12 24 24"><path d="M-8-6L-1-10Q8-10 8-4L2 3H-8Z" fill="#d8d8d8" stroke="#888"/><ellipse cx="3" cy="-6" rx="4" ry="2.600" fill="#bbb" stroke="#666"/><path d="M-9 5Q0-3 9 5Q0 13-9 5Z" fill="#222"/></svg>
      <svg viewBox="-12 -12 24 24"><use href="#tube" x="-12" y="-12" width="24" height="24" fill="#f6f6f6"/><ellipse cx="-4" cy="4" rx="3.500" ry="5.500" transform="rotate(-45 -4 4)" fill="none" stroke="#666"/></svg>
      <svg class="sel" viewBox="-12 -12 24 24"><use href="#tube" x="-12" y="-12" width="24" height="24" fill="#c81010"/></svg><hr>
      <svg viewBox="-12 -12 24 24"><use href="#tube" x="-12" y="-12" width="24" height="24" fill="#57a81c"/><path d="M-9 1L-5-4L6 5L0 9Q-8 10-9 1Z" fill="#e4e4e4"/><path d="M-10-7L9 10" stroke="#333"/></svg>
      <svg viewBox="-12 -12 24 24"><circle r="9.500" fill="#ddd" stroke="#555"/><path d="M0-9.500A9.500 9.500 0 0 0 0 9.500Z" fill="#ee7c14"/></svg><hr class="tight">
      <svg viewBox="-12 -12 24 24"><circle r="9" fill="url(#gSky)" stroke="#1d3f80" stroke-width="1.300"/></svg><b class="dd"></b>
    </div>
  </div>
  <div class="canvas">
    <svg class="graph" viewBox="1276 168 1274 1161">
      <path d="M1296.500 168V1330M1602 168V1330M1907.500 168V1330M2213 168V1330M2518.500 168V1330M1276 186H2550M1276 287.800H2550M1276 389.500H2550M1276 491.300H2550M1276 593H2550M1276 694.800H2550M1276 796.500H2550M1276 898.300H2550M1276 1000H2550M1276 1101.800H2550M1276 1203.500H2550M1276 1305.300H2550" stroke="#bbb7b0" stroke-width="1.800"/>
      <rect x="1346" y="320.500" width="1085" height="704" fill="#edecea" fill-opacity=".78" stroke="#a9a6a0" stroke-width="1.800"/>
      <g class="title"><text x="1375" y="387" font-size="50" textLength="386" lengthAdjust="spacingAndGlyphs">5.b. visualization</text><text x="1376" y="444" font-size="35.500" textLength="498" lengthAdjust="spacingAndGlyphs">display coloured force vectors</text></g>
      <g fill="#f3f2f1" fill-opacity=".85" stroke="#bdbbb8" stroke-width="1.600"><rect x="1380" y="539.500" width="143" height="90.500"/><rect x="1386.500" y="682.500" width="143" height="90"/><rect x="1508.500" y="799" width="293.500" height="81"/><rect x="1510.500" y="922.500" width="293.500" height="82"/></g>
      <path d="M1276 718Q1330 727 1398 727.500" fill="none" stroke="#a5a29c" stroke-width="2.600"/>
      <g fill="none" stroke="#5e5d5b" stroke-width="9.500"><path id="w1" d="M1512 585C1690 585 1690 513.500 1870 513.500"/><path id="w2" d="M1512 585C1885 585 1885 546.500 2260 546.500"/><path id="w3" d="M2097 493.500C2178 493.500 2178 505.500 2260 505.500"/><path id="w4" d="M2216 768C2316 768 2159 587.500 2259 587.500"/><path id="w5" d="M1518 727.500H1876"/></g>
      <g fill="none" stroke="#dededb" stroke-width="2.400"><use href="#w1"/><use href="#w2"/><use href="#w3"/><use href="#w4"/><use href="#w5"/></g>
      <g fill="none" stroke="#61605e" stroke-width="5.800"><path d="M1792 839.500C1835 839.500 1832 768 1875 768"/><path d="M1794 963.500C1898 963.500 1771 809 1875 809"/></g>
      <g fill="none" stroke="#8e8d8a" stroke-width="1.200"><path d="M1393 573A14 14 0 0 0 1393 597"/><path d="M1388 568A20 20 0 0 0 1388 602" opacity=".9"/><path d="M1383 564A26 26 0 0 0 1383 606" opacity=".8"/><path d="M1379 560A32 32 0 0 0 1379 610" opacity=".7"/></g>
      <g fill="#fff" stroke="#000" stroke-width="3.400"><circle cx="1401" cy="585" r="8.300"/><circle cx="1502" cy="585" r="8.300"/><circle cx="1407" cy="727.500" r="8.300"/><circle cx="1508" cy="727.500" r="8.300"/><circle cx="1880" cy="513.500" r="8.300"/><circle cx="2087" cy="493.500" r="8.300"/><circle cx="2087" cy="534" r="8.300"/><circle cx="2268" cy="505.500" r="8.300"/><circle cx="2268" cy="546.500" r="8.300"/><circle cx="2268" cy="587.500" r="8.300"/><circle cx="2268" cy="628" r="8.300"/><circle cx="1884" cy="727.500" r="8.300"/><circle cx="1884" cy="768" r="8.300"/><circle cx="1884" cy="809" r="8.300"/><circle cx="2207" cy="768" r="8.300"/><circle cx="1782.500" cy="839.500" r="8.300"/><circle cx="1784.500" cy="963.500" r="8.300"/></g>
      <g stroke="#1c1c1c" stroke-width="2"><rect x="1400.500" y="561" width="102.500" height="49" rx="4.500" fill="url(#gParam)"/><rect x="1406.500" y="703.500" width="102.500" height="49" rx="4.500" fill="url(#gParam)"/><rect x="1879" y="469.500" width="208" height="89" rx="5" fill="url(#gCurve)"/><rect x="1883.500" y="703.500" width="323.500" height="130" rx="5" fill="url(#gComp)"/><path d="M2273 481.500H2411L2419 489.300L2411 497.500L2419 505.700L2411 513.800L2419 522L2411 530.200L2419 538.300L2411 546.500L2419 554.700L2411 562.800L2419 571L2411 579.200L2419 587.300L2411 595.500L2419 603.700L2411 611.800L2419 620L2411 628.200L2419 636.300L2411 644.500L2419 652H2273Q2268 652 2268 647V486.500Q2268 481.500 2273 481.500Z" fill="url(#gComp)"/><rect x="1529" y="819.500" width="253" height="40.500" rx="5" fill="url(#gParam)"/><path d="M1700 819.500H1777Q1782 819.500 1782 824.500V855Q1782 860 1777 860H1700Z" fill="url(#gSwBlue)"/><rect x="1531" y="943.500" width="253" height="40.500" rx="5" fill="url(#gParam)"/><path d="M1702 943.500H1779Q1784 943.500 1784 948.500V979Q1784 984 1779 984H1702Z" fill="url(#gSwRed)"/></g>
      <use href="#hex" x="1427" y="561.500" width="48" height="48"/><path d="M1443 594L1458 577" stroke="#fff" stroke-width="3.500"/><path d="M1439 591.500h6v6h-6zM1455 574h6v6h-6z" fill="#222" stroke="#fff" stroke-width="2.400"/>
      <use href="#hex" x="1433" y="703.500" width="48" height="48"/><circle cx="1456.500" cy="728.500" r="12" fill="#fff"/><path d="M1462.500 722.500A8.500 8.500 0 0 1 1450.500 734.500Z" fill="#222"/>
      <path d="M1969 528C1990 526 1979 499 1999 497" fill="none" stroke="#8c0b10" stroke-width="4"/><g fill="#fff" stroke="#333" stroke-width="2"><circle cx="1969" cy="528" r="4"/><circle cx="1999" cy="497" r="4"/></g>
      <g stroke-width="4" fill="none"><path d="M2372 547L2381 555M2382 546V556H2371" stroke="#3cc81e"/><path d="M2391 560L2400 551M2391 550H2401V560" stroke="#4db084"/><path d="M2362 559L2371 567M2372 558V568H2361" stroke="#0aa00a"/><path d="M2376 565.500H2388M2384 560L2390 565.500L2384 571" stroke="#10b410"/><path d="M2397 583V571M2392 575L2397 569L2402 575" stroke="#13a47c"/><path d="M2361 580H2373M2369 575L2375 580L2369 585" stroke="#0c5c18"/><path d="M2380 586L2389 576M2380 576H2390V586" stroke="#0f7a5a"/></g>
      <g fill="#161616"><ellipse cx="2051" cy="760" rx="13" ry="13.500"/><circle cx="2043.500" cy="774" r="13"/><circle cx="2058.500" cy="774" r="13"/></g>
      <g fill="none" stroke="#8f8f8f" stroke-width="1.800"><path d="M2039 763Q2040 748 2051 747.500Q2062 748 2063 763Q2071 768 2071 776Q2069 787 2058 786.500Q2054 786 2051 784Q2047 787 2042 786.500Q2031 785 2031 775Q2032 767 2039 763"/><path d="M2039 763Q2039 776 2054 779Q2064 780 2070 774M2051 784Q2062 778 2060 767Q2057 756 2047 753M2036 766Q2046 760 2055 764Q2065 771 2063 785"/></g><circle cx="2051" cy="769.500" r="3" fill="#bbb"/>
      <g fill="#fff" stroke="#000" stroke-width="2"><circle cx="2027.500" cy="748" r="2.600"/><circle cx="2027.500" cy="789" r="2.600"/><circle cx="2027.500" cy="829.500" r="2.600"/></g>
      <g fill="url(#gLabel)" stroke="#222" stroke-width="1.600"><rect x="1889" y="713" width="27" height="27" rx="3"/><rect x="2172" y="754" width="27" height="27" rx="3"/></g>
      <path d="M1902.500 737V719M1894 727L1902.500 718.500L1911 727" fill="none" stroke="#777" stroke-width="3.600"/><path d="M2185.500 757V775M2177 768L2185.500 776.500L2194 768" fill="none" stroke="#555" stroke-width="3.600"/>
      <g fill="url(#gLabel)" stroke="#000" stroke-width="2"><path d="M1417 493.500H1486V528H1461.500L1451.500 540L1441.500 528H1417Z"/><path d="M1342 636H1574V670.500H1467.500L1457.500 683L1447.500 670.500H1342Z"/><path d="M1561.500 752H1749V786.500H1665L1655 799L1645 786.500H1561.500Z"/><path d="M1590 876.500H1724.500V911H1667L1657 923L1647 911H1590Z"/></g>
      <path d="M1589 877H1725.500" stroke="#777" stroke-width="2"/>
      <g class="lbl"><text x="1426" y="517.500" textLength="50" lengthAdjust="spacingAndGlyphs">force</text><text x="1351" y="660.500" textLength="212" lengthAdjust="spacingAndGlyphs">tension/ compression</text><text x="1571" y="776.500" textLength="168" lengthAdjust="spacingAndGlyphs">if in compression</text><text x="1599" y="900.500" textLength="115" lengthAdjust="spacingAndGlyphs">if in tension</text><text x="1543" y="846.500" textLength="142" lengthAdjust="spacingAndGlyphs">Colour Swatch</text><text x="1545" y="970.500" textLength="142" lengthAdjust="spacingAndGlyphs">Colour Swatch</text><text x="1893.500" y="520.500" textLength="57" lengthAdjust="spacingAndGlyphs">Curve</text><text x="2018.500" y="500" textLength="47" lengthAdjust="spacingAndGlyphs">Start</text><text x="2018.500" y="541" textLength="37" lengthAdjust="spacingAndGlyphs">End</text><text x="2295.500" y="512.500" textLength="52" lengthAdjust="spacingAndGlyphs">Point</text><text x="2283" y="553.500" textLength="65" lengthAdjust="spacingAndGlyphs">Vector</text><text x="2281.500" y="594" textLength="66" lengthAdjust="spacingAndGlyphs">Colour</text><text x="2288" y="634.500" textLength="59" lengthAdjust="spacingAndGlyphs">Width</text><text x="1946" y="734.500" textLength="71" lengthAdjust="spacingAndGlyphs">Pattern</text><text x="1930" y="775.500" textLength="88" lengthAdjust="spacingAndGlyphs">Stream 0</text><text x="1930" y="816" textLength="86" lengthAdjust="spacingAndGlyphs">Stream 1</text><text x="2086" y="775.500" textLength="66" lengthAdjust="spacingAndGlyphs">Weave</text></g>
      <circle cx="2521" cy="1298" r="17.500" fill="#f4f4f2" stroke="#2a2a2a" stroke-width="5"/><circle cx="2521" cy="1298" r="17.500" fill="none" stroke="#eee" stroke-width="2.200" stroke-dasharray="11 2.745"/><path d="M2495 1284L2503 1287L2499 1294Z" fill="#111"/>
    </svg>
    <div class="mini">
      <svg viewBox="-12 -12 24 24"><path d="M0 1L7-6" stroke="#000" stroke-width="4.500"/><path d="M1-10H11V0Z"/><path d="M0 0Q-4-2-10-6" stroke="#33c" stroke-width="3" fill="none"/><path d="M0 1Q-5 2-10 7" stroke="#2a8" stroke-width="2" fill="none"/><path d="M0 0Q3 5 3 11" stroke="#d22" stroke-width="3" fill="none"/></svg>
      <svg viewBox="-12 -12 24 24"><use href="#scrib" x="-12" y="-12" width="24" height="24"/></svg>
      <svg viewBox="-12 -12 24 24"><path d="M0 11V0M0 2L-9-5M0 2L9-5M0 2L-4-9M0 2L4-9M0 2L-10 2M0 2L10 2M0 2V-11" stroke="#ee7211" stroke-width="2.400"/><path d="M0 11V1M-5 10H5" stroke="#7a1b0a" stroke-width="3"/></svg>
      <svg viewBox="-12 -12 24 24"><path d="M-5 9Q-6-4 5-8M-8 5L-5 10L-2 5M2-11L7-8L2-5" fill="none" stroke="#111" stroke-width="1.800"/><path d="M3 10Q1 0 6-3" stroke="#a11" stroke-width="3.500" fill="none"/></svg>
      <svg viewBox="-12 -12 24 24"><path d="M10-10H4L6-5H1L3 0H-2" fill="none" stroke="#111" stroke-width="3"/><path d="M-9 1L-3 3L-1 10" stroke="#173" stroke-width="3" fill="none"/><path d="M0 2L3 10" stroke="#b22" stroke-width="3"/></svg>
    </div>
  </div>
  <footer class="gstat"><svg viewBox="0 0 16 16"><circle cx="8" cy="8" r="7.500" fill="#2c6cb4" stroke="#123"/><path d="M8 2.500V9.500M8 11V13" stroke="#fff" stroke-width="2.200"/></svg><span>Autosave complete (290 seconds ago)</span><em>1.0.0007</em></footer>
</section>
</main>
</body>
</html>
```

FILE: styles.css
```css
* { box-sizing: border-box; }
body { margin: 0; width: 2550px; height: 1348px; overflow: hidden; font-family: "Open Sans", "Noto Sans", sans-serif; font-size: 11.5px; color: #1a1a1a; }
.defs { position: absolute; width: 0; height: 0; }
.desktop { display: flex; width: 2550px; height: 1348px; }
svg { display: block; }

/* Modelling window */
.rhino { width: 1276px; flex: none; display: flex; flex-direction: column; background: #eaebef; border-left: 1.5px solid #2a7fae; border-bottom: 1.5px solid #2486b4; box-shadow: inset -9px 0 7px -5px #c9cacd; letter-spacing: -.15px; white-space: nowrap; }
.rtabs { height: 18px; display: grid; grid-template-columns: 77.500px 67px 71px 64px 57px 111px 69px 78px 87.500px 95.500px 82px 86px 94px 68px 81px 1fr; line-height: 18px; border-bottom: 1px solid #d3d6e0; }
.rtabs span { position: relative; background: #d9d9d9; padding-left: 13.500px; }
.rtabs span.on { background: #eaebef; padding-left: 18.500px; }
.rtabs span + span::before { content: ""; position: absolute; left: 0; top: 0; width: 1px; height: 17px; background: #eceef4; transform: skewX(-28deg); }
.rtabs b { justify-self: end; font: 18px/16px "DejaVu Sans", sans-serif; color: #999; }
.rtools { height: 33px; padding-left: 5.500px; display: flex; align-items: center; border-bottom: 1px solid #d3d6e0; }
.rtools > * { width: 28.080px; height: 28px; flex: none; }
.q { font: bold 17px "Liberation Serif", serif; fill: #fff; }
.wheel { background: radial-gradient(circle, #fff 0 4.500px, transparent 5px), conic-gradient(#ff0, #f70, #f00, #f0f, #00f, #0ff, #0f0, #ff0); clip-path: circle(9.500px at 50% 48%); }
.cmd { height: 18px; margin: 1px 0 2px 4px; padding-left: 2.500px; background: #fff; font-weight: bold; font-size: 12px; line-height: 18px; letter-spacing: -.35px; color: #000; display: flex; justify-content: space-between; }
.cmd i { width: 14px; margin-right: 4px; display: grid; }
.cmd i b { font: 5px/8px "DejaVu Sans"; border: 1px solid #ccc; background: #f4f4f4; text-align: center; }
.work { height: 1214.500px; display: flex; }
.side { width: 31.500px; flex: none; padding-top: 7.500px; }
.side svg { width: 28px; height: 28.050px; margin-left: -.5px; }
.view { position: relative; flex: 1; border: solid #d5d9e4; border-width: 1px 0 1px 1px; background: linear-gradient(270deg, #dcdcdc, #fff 10px); }
.drawing { width: 100%; height: 100%; }
.vtitle { position: absolute; left: 0; top: 0; width: 134px; height: 18px; display: flex; background: #8ea7c3; font-weight: bold; font-size: 12px; line-height: 18px; color: #000; letter-spacing: -.4px; border-radius: 0 0 4px 0; }
.vtitle span { width: 122.500px; padding-left: 5px; border-right: 1px solid #222; }
.vtitle b { flex: 1; text-align: center; font: 7px/18px "DejaVu Sans"; }
.dim text { font-size: 13px; fill: #149414; }
.axis text { font-size: 8px; fill: #666; }
.vtabs { height: 21px; display: grid; grid-template-columns: 118px 76px 44px 45px 29px; padding-left: 31.500px; line-height: 21px; }
.vtabs span { background: #d9d9d9; clip-path: polygon(0 0, 100% 0, 100% 100%, 9px 100%); padding-left: 12px; border-right: 1px solid #c9ccd5; }
.vtabs span.on { background: #eff0f4; }
.vtabs .add { background: #eeeff3; color: #999; }
.osnap { height: 23px; padding: 5px 0 0 8px; display: grid; grid-template-columns: 43.500px 48.500px 50px 44.500px 43.500px 37px 47.500px 42px 51.500px 48px 58px 69px 60px; line-height: 18px; }
.osnap label { display: flex; gap: 3.500px; align-items: center; height: 18px; }
.osnap label::before { content: ""; width: 12.500px; height: 13px; font: 9px/11px "DejaVu Sans"; background: #fff; border: 1px solid #444; }
.osnap .c::before { content: "✓"; }
.osnap .d::before { background: #ddd; border-color: #bbb; }
.rstat { flex: 1; display: grid; grid-template-columns: 45px 84px 84px 84px 84.500px 163.500px 62px 41.500px 43px 43px 69.500px 54px 88.500px 36.500px 273px 1fr; border-top: 1px solid #cfd3de; line-height: 15px; overflow: hidden; font-size: 11.200px; }
.rstat span { border-right: 1px solid #cfd3de; text-align: center; }
.rstat .lay { text-align: left; padding-left: 3px; }
.rstat .lay i { display: inline-block; width: 11px; height: 11px; background: #000; vertical-align: -1px; margin-right: 2px; }
.rstat .hot { background: #e0effa; font-weight: bold; color: #000; letter-spacing: -.5px; }
.rstat .mem { text-align: left; letter-spacing: .15px; }

/* Node editor window */
.gh { width: 1274px; display: flex; flex-direction: column; background: #f0f0f0; font-family: "Liberation Sans", Arial, sans-serif; }
.gtabs { height: 26px; padding-top: 4px; display: flex; font-size: 10px; line-height: 21px; color: #666; letter-spacing: .28px; border-bottom: 1px solid #aaa; white-space: nowrap; box-shadow: inset 0 3px #fafafa; }
.gtabs span { padding: 0 8.200px 0 8px; }
.gtabs .on { background: #fff; color: #000; padding: 0 7px; border: 1px solid #aaa; border-width: 1px 1px 0; border-radius: 3px 7px 0 0; height: 22px; margin-right: 1px; letter-spacing: .4px; }
.ribbon { height: 114px; padding: 1px 2px 0; display: flex; align-items: flex-start; gap: 3.200px; border-bottom: 1px solid #999; background: linear-gradient(#e2e2e2, #f1f1f1 60px); }
.panel { border: 1px solid #aaa; border-radius: 4px; background: linear-gradient(#d7d7d7, #f2f2f2); overflow: hidden; height: 100px; }
.groups { display: flex; height: 85px; padding: 0 2px 0 1px; }
.grp { display: grid; grid-template-rows: repeat(3, 28px); grid-auto-flow: column; grid-auto-columns: 28px; padding-right: 4.500px; margin-right: 4.400px; border-right: 1px solid #c6c6c6; }
.grp:last-child { border: 0; margin: 0; padding: 0; }
.grp > svg { width: 24px; height: 24px; margin: 2px; overflow: visible; }
.grp .wheel { width: 20px; height: 20px; margin: 4px; clip-path: circle(10px); }
.grp .pale { background: radial-gradient(circle, #fff 0 3px, #fff0 10px), conic-gradient(#ff0, #f70, #f00, #f0f, #00f, #0ff, #0f0, #ff0); }
.panel h6 { position: relative; margin: 0; height: 14px; background: #1c1c1c; color: #eee; font: 10px/13px "Liberation Sans", sans-serif; letter-spacing: .2px; text-align: center; }
.panel h6 b { position: absolute; right: 3px; top: 1px; color: #999; }
.grp text { text-anchor: middle; font-family: "Liberation Sans", sans-serif; font-weight: bold; }
.grp .t7 { text-anchor: start; font-size: 7px; fill: #ccc; }
.t14 { font-size: 14px; fill: #fff; }
.grp .t12s { font-family: "Liberation Serif", serif; font-size: 12px; fill: #eee; }
.grp .t16s { font-family: "Liberation Serif", serif; font-size: 17px; fill: #fff; }
.t9k { font-size: 9px; fill: #111; }
.t9w { font-size: 9px; fill: #eee; }
.t14i { font-size: 15px; font-style: italic; fill: #222; }
.t8g { font-size: 8px; fill: #888; }
.t7w { font-size: 7px; fill: #ddd; }
.t16w { font-size: 16px; fill: #fff; }
.grp .chip { font-size: 9px; font-family: "Liberation Mono", monospace; fill: #111; }
.grp .abc { font-size: 9px; font-style: italic; fill: #222; }
.grp .fx { font: italic 12px "Liberation Serif", serif; fill: #333; }
.gbar { height: 28px; padding: 0 3px 0 0; display: flex; align-items: center; background: linear-gradient(#fff, #f0f0f0); }
.gbar svg { width: 22px; height: 22px; margin: 0 2.500px; flex: none; }
.gbar > svg:first-child { margin-left: 1px; margin-right: 4px; }
.zoombox { width: 135px; height: 20px; margin: 0 1px 0 4px; padding: 0 4px 0 2px; border: 1px solid #999; background: #fff; font-size: 12px; line-height: 19px; display: flex; align-items: center; justify-content: space-between; color: #222; }
.gbar .zoombox svg { width: 8px; height: 5px; margin: 0; }
.dd { width: 0; height: 0; margin: 0 3.500px; border: 2.500px solid transparent; border-top: 3px solid #111; border-bottom: 0; }
.right { margin-left: auto; display: flex; align-items: center; }
.right .dd { margin: 0 -2px 0 2px; }
.right hr { width: 1px; height: 22px; margin: 0 3px; border: 0; background: #ccc; }
.right .tight { margin: 0 .5px; }
.gbar .sel { width: 27px; height: 26px; padding: 1px; border: 1px solid #62a8e0; background: #e8f3fc; margin: 0; }
.canvas { position: relative; height: 1161px; background: #d4d0c8; }
.graph { width: 1274px; height: 1161px; }
.title text { font-family: "Liberation Sans", Arial, sans-serif; fill: #000; }
.lbl text { font: 20.500px "Open Sans", "Noto Sans", sans-serif; fill: #0c0c0c; }
.mini { position: absolute; left: 0; bottom: 1px; width: 147px; height: 29px; display: flex; align-items: center; gap: 4px; padding-left: 2px; border: 1px solid #666; border-right: 6px solid #777; background: linear-gradient(#ddd, #9a9a9a); }
.mini svg { width: 24px; height: 24px; }
.gstat { flex: 1; display: flex; align-items: center; gap: 4px; padding: 0 29px 0 2px; font: 11.300px "Open Sans", sans-serif; background: #f2f2f2; letter-spacing: .12px; }
.gstat svg { width: 16px; height: 16px; }
.gstat em { margin-left: auto; font-style: normal; color: #999; letter-spacing: -.2px; }
```
